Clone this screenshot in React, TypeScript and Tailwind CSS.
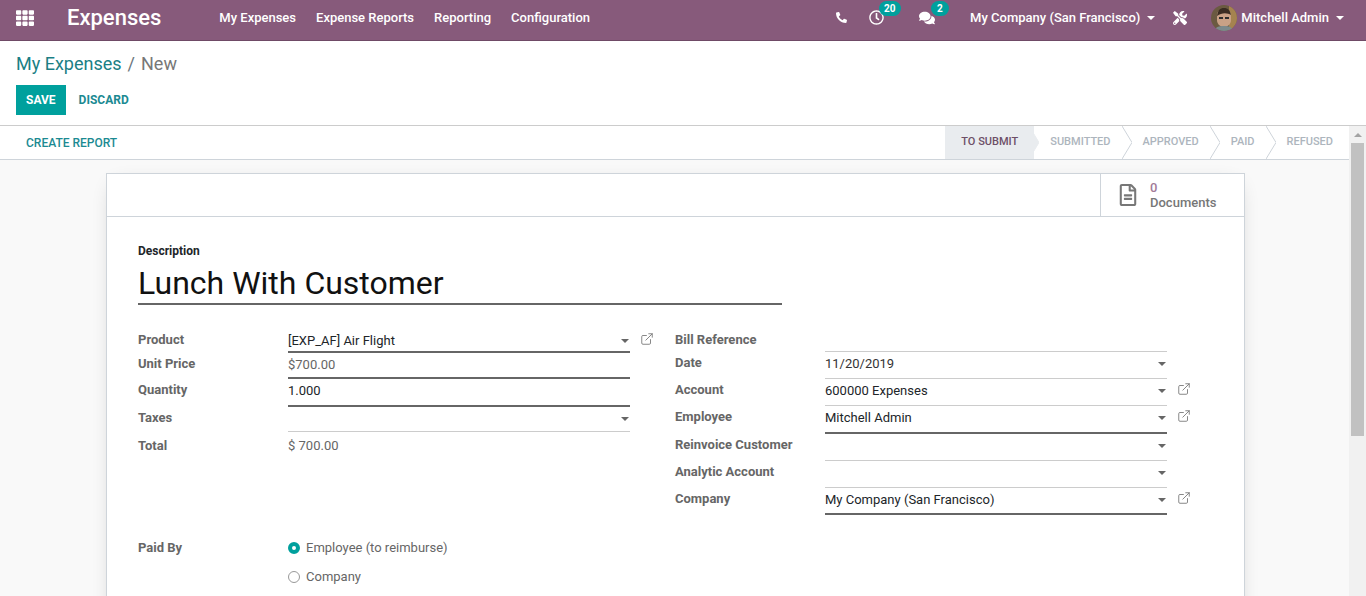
import React from 'react';
import { FaTh, FaPhone, FaRegClock, FaComments, FaTools, FaRegFileAlt, FaCaretDown } from 'react-icons/fa';
import { ExternalLink } from 'lucide-react';

const menus = ['My Expenses', 'Expense Reports', 'Reporting', 'Configuration'];
const stages = ['TO SUBMIT', 'SUBMITTED', 'APPROVED', 'PAID', 'REFUSED'];

type FieldProps = {
  label: string;
  value?: string;
  rowClass: string;
  strong?: boolean;
  caret?: boolean;
  link?: boolean;
  textClass?: string;
};

const Caret = () => <span className="h-0 w-0 border-x-[4px] border-t-[4px] border-x-transparent border-t-[#666]" />;

const Field = ({ label, value, rowClass, strong, caret, link, textClass = 'text-[#212529]' }: FieldProps) => (
  <div className={`flex ${rowClass}`}>
    <div className="w-[150px] pt-[2px] text-[13px] leading-[18px] font-bold text-[#666]">{label}</div>
    <div className={`flex h-full w-[342px] items-start justify-between ${strong ? 'border-b-2 border-[#666]' : 'border-b border-[#ccc]'}`}>
      <span className={`pt-[3px] text-[13px] leading-[18px] ${textClass}`}>{value}</span>
      {caret && <span className="mt-[10px] mr-[1px] flex"><Caret /></span>}
    </div>
    {link && <ExternalLink size={14} strokeWidth={1.5} className="mt-[3px] ml-[10px] text-[#777]" />}
  </div>
);

const Avatar = () => (
  <svg width="26" height="26" viewBox="0 0 26 26" className="rounded-full">
    <rect width="26" height="26" fill="#6b5a41" />
    <rect x="18" width="8" height="26" fill="#a5834f" />
    <path d="M6 11c0-5 3-7 7-7s7 2 7 7v4c0 4-3 7-7 7s-7-3-7-7z" fill="#c9a186" />
    <path d="M6 11c1-6 3-8 7-8s6 2 7 7c-3-2-9-3-14 1z" fill="#3a2c22" />
    <path d="M8 12h4v2H8zM14 12h4v2h-4z" fill="#2d2d2d" />
    <path d="M3 26c1-4 5-5 10-5s8 1 10 5z" fill="#7d8a8c" />
  </svg>
);

export default function App() {
  return (
    <div className="flex h-[596px] w-[1366px] flex-col overflow-hidden bg-white font-['Roboto',sans-serif]">
      <header className="flex h-[41px] shrink-0 items-center border-b border-[#6f4a66] bg-[#875a7b] pb-[5px] text-white">
        <FaTh size={18} className="ml-[16px]" />
        <span className="ml-[33px] text-[22px] font-medium">Expenses</span>
        <nav className="ml-[58px] flex gap-[20px] text-[13px] font-medium">
          {menus.map((m) => (
            <span key={m}>{m}</span>
          ))}
        </nav>
        <div className="ml-auto flex items-center text-[13px] font-medium">
          <FaPhone size={11} className="mr-[22px] scale-x-[-1]" />
          <span className="relative mr-[35px]">
            <FaRegClock size={15} />
            <span className="absolute top-[-9px] left-[10px] rounded-full bg-[#00a09d] px-[5px] text-[10px] leading-[15px] font-bold">20</span>
          </span>
          <span className="relative mr-[35px]">
            <FaComments size={16} />
            <span className="absolute top-[-9px] left-[12px] rounded-full bg-[#00a09d] px-[6px] text-[10px] leading-[15px] font-bold">2</span>
          </span>
          <span>My Company (San Francisco)</span>
          <span className="ml-[7px] h-0 w-0 border-x-[4px] border-t-[4px] border-x-transparent border-t-white" />
          <FaTools size={14} className="mr-[24px] ml-[18px]" />
          <Avatar />
          <span className="ml-[4px]">Mitchell Admin</span>
          <span className="mr-[22px] ml-[7px] h-0 w-0 border-x-[4px] border-t-[4px] border-x-transparent border-t-white" />
        </div>
      </header>

      <div className="h-[85px] shrink-0 border-b border-[#ccc] px-[16px]">
        <div className="pt-[10px] text-[18px] leading-[25px]">
          <span className="text-[#1b7f85]">My Expenses</span>
          <span className="mx-[6px] text-[#6c757d]">/</span>
          <span className="text-[#777]">New</span>
        </div>
        <div className="mt-[9px] flex items-center">
          <button className="h-[30px] bg-[#00a09d] px-[10px] text-[12px] font-bold text-white">SAVE</button>
          <button className="ml-[13px] text-[12px] font-bold text-[#1b8a92]">DISCARD</button>
        </div>
      </div>

      <div className="flex min-h-0 flex-1">
        <div className="flex min-w-0 flex-1 flex-col bg-[#f9f9f9]">
          <div className="flex h-[34px] shrink-0 items-stretch justify-between border-b border-[#ced4da] bg-white">
            <button className="ml-[26px] text-[12px] font-medium text-[#1b8a92]">CREATE REPORT</button>
            <div className="flex items-stretch">
              {stages.map((s, i) => (
                <div
                  key={s}
                  className={`relative flex items-center px-[16px] text-[11px] font-medium ${i === 0 ? 'bg-[#e9ecef] text-[#6d4f67]' : 'text-[#adb5bd]'}`}
                >
                  {s}
                  {i < stages.length - 1 && (
                    <svg width="10" height="33" viewBox="0 0 10 33" className="absolute top-0 right-[-5px] z-10">
                      <path d="M0 0L10 16.5L0 33" fill={i === 0 ? '#e9ecef' : 'white'} stroke={i === 0 ? '#e9ecef' : '#ced4da'} />
                    </svg>
                  )}
                </div>
              ))}
            </div>
          </div>

          <div className="min-h-0 flex-1 px-[106px] pt-[13px]">
            <div className="w-[1139px] border border-[#ced4da] bg-white shadow-[0_5px_20px_-10px_rgba(0,0,0,0.3)]">
              <div className="flex h-[43px] justify-end border-b border-[#ced4da]">
                <div className="flex w-[144px] items-center border-l border-[#ced4da] pl-[16px]">
                  <FaRegFileAlt size={22} className="text-[#777]" />
                  <div className="ml-[11px] text-[13px] leading-[15px] font-medium">
                    <div className="text-[#a27b98]">0</div>
                    <div className="text-[#777]">Documents</div>
                  </div>
                </div>
              </div>

              <div className="px-[31px] pt-[26px] pb-[40px]">
                <div className="text-[12px] leading-[16px] font-bold text-[#212529]">Description</div>
                <div className="mt-[4px] h-[42px] w-[644px] border-b-2 border-[#666] text-[32px] leading-[41px] text-[#111]">Lunch With Customer</div>

                <div className="mt-[24px] grid grid-cols-[537px_1fr]">
                  <div>
                    <Field label="Product" value="[EXP_AF] Air Flight" rowClass="h-[24px]" strong caret link />
                    <Field label="Unit Price" value="$700.00" rowClass="h-[26px]" strong textClass="text-[#666]" />
                    <Field label="Quantity" value="1.000" rowClass="h-[28px]" strong />
                    <Field label="Taxes" rowClass="h-[25px]" caret />
                    <div className="flex h-[27px] pt-[5px] text-[13px] leading-[18px]">
                      <div className="w-[150px] font-bold text-[#666]">Total</div>
                      <div className="text-[#666]">$ 700.00</div>
                    </div>
                  </div>
                  <div>
                    <Field label="Bill Reference" rowClass="h-[23px]" />
                    <Field label="Date" value="11/20/2019" rowClass="h-[27px]" caret textClass="text-[#333]" />
                    <Field label="Account" value="600000 Expenses" rowClass="h-[27px]" caret link />
                    <Field label="Employee" value="Mitchell Admin" rowClass="h-[28px]" strong caret link />
                    <Field label="Reinvoice Customer" rowClass="h-[27px]" caret />
                    <Field label="Analytic Account" rowClass="h-[27px]" caret />
                    <Field label="Company" value="My Company (San Francisco)" rowClass="h-[27px]" strong caret link />
                  </div>
                </div>

                <div className="mt-[24px] flex text-[13px] leading-[18px]">
                  <div className="w-[150px] font-bold text-[#666]">Paid By</div>
                  <div className="flex flex-col gap-[11px] text-[#666]">
                    <label className="flex items-center gap-[6px]">
                      <span className="h-[12px] w-[12px] rounded-full border-[4px] border-[#00a09d] bg-white" />
                      Employee (to reimburse)
                    </label>
                    <label className="flex items-center gap-[6px]">
                      <span className="h-[12px] w-[12px] rounded-full border border-[#999] bg-white" />
                      Company
                    </label>
                  </div>
                </div>
              </div>
            </div>
          </div>
        </div>

        <div className="flex w-[17px] shrink-0 flex-col bg-[#f1f1f1]">
          <div className="flex h-[17px] items-center justify-center">
            <span className="h-0 w-0 border-x-[4px] border-b-[4px] border-x-transparent border-b-[#a3a3a3]" />
          </div>
          <div className="mx-[2px] h-[293px] bg-[#c1c1c1]" />
        </div>
      </div>
    </div>
  );
}
